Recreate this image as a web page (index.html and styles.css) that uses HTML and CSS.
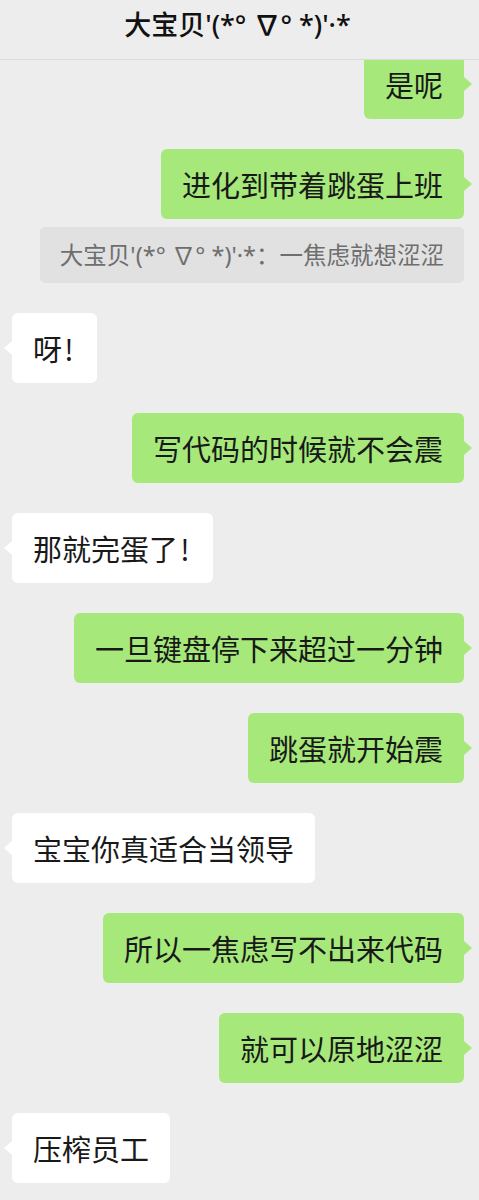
FILE: index.html
```html
<!DOCTYPE html>
<html lang="zh-CN">
<head>
<meta charset="utf-8">
<title>大宝贝</title>
<link rel="stylesheet" href="styles.css">
</head>
<body>
<div class="screen">
  <header class="topbar">
    <div class="title">大宝贝'(*° ∇° *)'·*</div>
  </header>
  <main class="chat">
    <div class="msg right">是呢</div>
    <div class="group">
      <div class="msg right">进化到带着跳蛋上班</div>
      <div class="quote">大宝贝'(*° ∇° *)'·*：一焦虑就想涩涩</div>
    </div>
    <div class="msg left">呀<span class="bang">!</span></div>
    <div class="msg right">写代码的时候就不会震</div>
    <div class="msg left">那就完蛋了<span class="bang">!</span></div>
    <div class="msg right">一旦键盘停下来超过一分钟</div>
    <div class="msg right">跳蛋就开始震</div>
    <div class="msg left">宝宝你真适合当领导</div>
    <div class="msg right">所以一焦虑写不出来代码</div>
    <div class="msg right">就可以原地涩涩</div>
    <div class="msg left">压榨员工</div>
  </main>
</div>
</body>
</html>
```

FILE: styles.css
```css
* { box-sizing: border-box; }

html, body {
  margin: 0;
  padding: 0;
  background: #ededed;
}

body {
  font-family: "Noto Sans CJK SC", "Noto Sans", sans-serif;
  color: #191919;
}

.screen {
  position: relative;
  width: 479px;
  height: 1200px;
  overflow: hidden;
  background: #ededed;
}

.topbar {
  position: absolute;
  top: 0;
  left: 0;
  right: 0;
  height: 60px;
  padding-top: 5px;
  background: #ededed;
  border-bottom: 1px solid #dadada;
  z-index: 2;
}

.title {
  text-align: center;
  font-family: "Noto Sans", "Noto Sans CJK SC", sans-serif;
  font-size: 27px;
  line-height: 40px;
  font-weight: 500;
  color: #111;
  padding-right: 4px;
}

.chat {
  display: flex;
  flex-direction: column;
  gap: 30px;
  padding: 49px 15px 0 12px;
}

.group {
  display: flex;
  flex-direction: column;
  align-items: flex-end;
  gap: 8px;
}

.msg {
  position: relative;
  font-size: 29px;
  line-height: 40px;
  padding: 15px 21px;
  border-radius: 6px;
  white-space: nowrap;
}

.msg.right {
  align-self: flex-end;
  background: #a6e97a;
}

.msg.left {
  align-self: flex-start;
  background: #ffffff;
}

.msg::after {
  content: "";
  position: absolute;
  top: 28px;
  width: 0;
  height: 0;
  border-top: 7px solid transparent;
  border-bottom: 7px solid transparent;
}

.msg.right::after {
  right: -8px;
  border-left: 8px solid #a6e97a;
}

.msg.left::after {
  left: -8px;
  border-right: 8px solid #ffffff;
}

.bang {
  display: inline-block;
  width: 14px;
  text-align: center;
}

.quote {
  background: #e1e1e1;
  color: #6e6e6e;
  font-family: "Noto Sans", "Noto Sans CJK SC", sans-serif;
  font-size: 23.5px;
  line-height: 32px;
  padding: 12px 20px;
  border-radius: 5px;
  white-space: nowrap;
}
```
